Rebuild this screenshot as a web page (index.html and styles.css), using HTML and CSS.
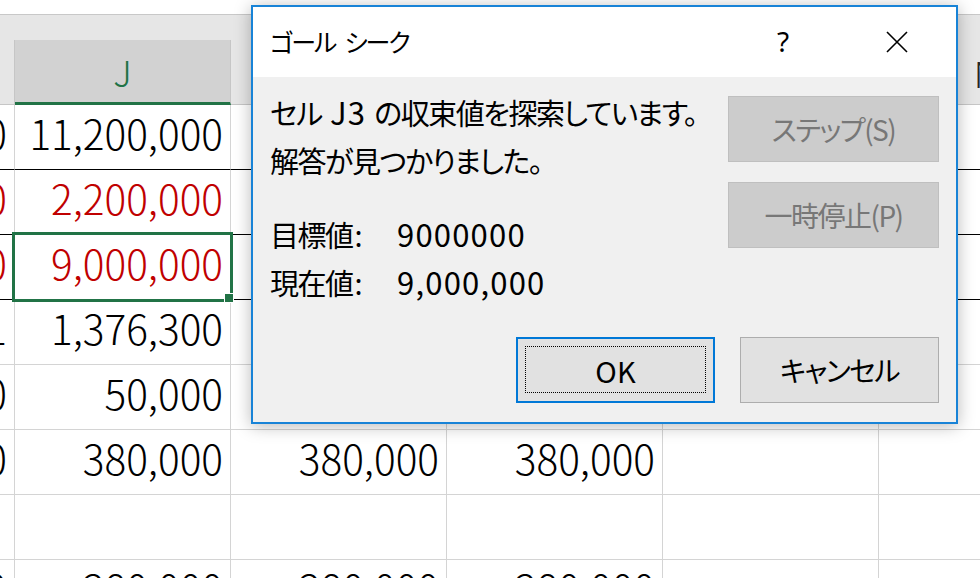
FILE: index.html
```html
<!DOCTYPE html>
<html lang="ja">
<head>
<meta charset="utf-8">
<title>ゴール シーク</title>
<link rel="stylesheet" href="styles.css">
</head>
<body>
<div class="app">
  <div class="topstrip"></div>
  <div class="colband"></div>
  <div class="colheads">
    <div class="ch"></div>
    <div class="ch sel">J</div>
    <div class="ch">K</div>
    <div class="ch">L</div>
    <div class="ch">M</div>
    <div class="ch">N</div>
  </div>
  <div class="sheet">
    <div class="row dark">
      <div class="cell">0</div>
      <div class="cell">11,200,000</div>
      <div class="cell"></div><div class="cell"></div><div class="cell"></div><div class="cell"></div>
    </div>
    <div class="row dark">
      <div class="cell red">0</div>
      <div class="cell red">2,200,000</div>
      <div class="cell"></div><div class="cell"></div><div class="cell"></div><div class="cell"></div>
    </div>
    <div class="row dark">
      <div class="cell red">0</div>
      <div class="cell red">9,000,000</div>
      <div class="cell"></div><div class="cell"></div><div class="cell"></div><div class="cell"></div>
    </div>
    <div class="row">
      <div class="cell">1</div>
      <div class="cell">1,376,300</div>
      <div class="cell"></div><div class="cell"></div><div class="cell"></div><div class="cell"></div>
    </div>
    <div class="row">
      <div class="cell">0</div>
      <div class="cell">50,000</div>
      <div class="cell"></div><div class="cell"></div><div class="cell"></div><div class="cell"></div>
    </div>
    <div class="row">
      <div class="cell">0</div>
      <div class="cell">380,000</div>
      <div class="cell">380,000</div>
      <div class="cell">380,000</div>
      <div class="cell"></div><div class="cell"></div>
    </div>
    <div class="row">
      <div class="cell"></div><div class="cell"></div><div class="cell"></div>
      <div class="cell"></div><div class="cell"></div><div class="cell"></div>
    </div>
    <div class="row">
      <div class="cell">0</div>
      <div class="cell">380,000</div>
      <div class="cell">380,000</div>
      <div class="cell">380,000</div>
      <div class="cell"></div><div class="cell"></div>
    </div>
  </div>

  <div class="selection"></div>
  <div class="fill-handle"></div>

  <div class="dialog">
    <div class="titlebar">
      <div class="title">ゴール<span class="gap"> </span>シーク</div>
      <div class="tb-help">?</div>
      <div class="tb-close">
        <svg width="22" height="22" viewBox="0 0 22 22"><path d="M1 1 L21 21 M21 1 L1 21" stroke="#000" stroke-width="1.6" fill="none"/></svg>
      </div>
    </div>
    <div class="dbody">
      <div class="top">
        <div class="texts">
          <div class="msg">
            <div>セル<span class="num"> J3 </span>の収束値を探索しています。</div>
            <div>解答が見つかりました。</div>
          </div>
          <div class="vals">
            <div>目標値<span class="colon">:</span></div><div class="num">9000000</div>
            <div>現在値<span class="colon">:</span></div><div class="num">9,000,000</div>
          </div>
        </div>
        <div class="btncol">
          <div class="btn dis">ステップ(S)</div>
          <div class="btn dis">一時停止(P)</div>
        </div>
      </div>
      <div class="bottom">
        <div class="btn wide ok"><span class="focus"></span>OK</div>
        <div class="btn wide">キャンセル</div>
      </div>
    </div>
  </div>
</div>
</body>
</html>
```
FILE: styles.css
```css
* { box-sizing: border-box; }
html, body { margin: 0; padding: 0; }
body {
  width: 980px;
  height: 578px;
  overflow: hidden;
  background: #fff;
  font-family: "Noto Sans CJK JP", "Noto Sans", sans-serif;
}
.app {
  position: relative;
  width: 980px;
  height: 578px;
  overflow: hidden;
}
.topstrip { height: 14px; background: #fff; }
.colband {
  height: 26px;
  background: #e6e6e6;
  border-top: 1px solid #c8c8c8;
}
.colheads, .row {
  display: grid;
  grid-template-columns: 15px 216px 216px 216px 216px 216px;
}
.colheads { height: 65px; }
.ch {
  background: #e6e6e6;
  border-right: 1px solid #c6c6c6;
  border-bottom: 1px solid #c6c6c6;
  color: #262626;
  font-size: 36px;
  font-weight: 300;
  display: flex;
  align-items: center;
  justify-content: center;
}
.ch.sel {
  background: #d2d2d2;
  border-bottom: 3px solid #217346;
  color: #217346;
}
.row { height: 65px; }
.cell {
  border-right: 1px solid #d4d4d4;
  border-bottom: 1px solid #d4d4d4;
  display: flex;
  justify-content: flex-end;
  align-items: flex-start;
  padding-right: 7px;
  overflow: hidden;
  white-space: nowrap;
  font-size: 40.5px;
  font-weight: 300;
  line-height: 55px;
  color: #000;
}
.row.dark .cell { border-bottom-color: #000; }
.cell.red { color: #c00000; }

.selection {
  position: absolute;
  left: 12px;
  top: 232px;
  width: 221px;
  height: 70px;
  border: 3px solid #217346;
}
.fill-handle {
  position: absolute;
  left: 224px;
  top: 293px;
  width: 10px;
  height: 10px;
  background: #217346;
  border: 1px solid #fff;
}

.dialog {
  position: absolute;
  left: 251px;
  top: 5px;
  width: 707px;
  height: 419px;
  border: 2px solid #1883d7;
  background: #f0f0f0;
  display: flex;
  flex-direction: column;
  box-shadow: 0 2px 16px rgba(0, 0, 0, 0.28);
  color: #000;
}
.titlebar {
  height: 70px;
  background: #fff;
  display: flex;
  align-items: center;
  padding-left: 17px;
  font-size: 25px;
  font-feature-settings: "palt";
}
.title { flex: 1; margin-top: -2px; letter-spacing: -2px; }
.gap { display: inline-block; width: 9px; }
.tb-help {
  width: 60px;
  text-align: center;
  font-family: "Noto Sans", sans-serif;
  font-size: 28px;
  margin-top: -2px;
}
.tb-close {
  width: 92px;
  margin-left: 38px;
  margin-right: 13px;
  display: flex;
  justify-content: center;
  align-items: center;
}
.dbody {
  flex: 1;
  padding: 19px 17px 19px 17px;
  display: flex;
  flex-direction: column;
  font-size: 29px;
  font-feature-settings: "palt";
}
.top {
  display: flex;
  justify-content: space-between;
}
.texts { letter-spacing: -1.5px; }
.num {
  font-size: 31px;
  letter-spacing: 1.2px;
  font-feature-settings: normal;
}
.colon { letter-spacing: 0; padding-left: 2px; }
.msg {
  margin-top: -8px;
  line-height: 48px;
}
.vals {
  margin-top: 26px;
  line-height: 48px;
  display: grid;
  grid-template-columns: 127px auto;
}
.btncol {
  width: 211px;
  display: flex;
  flex-direction: column;
  gap: 20px;
}
.btn {
  height: 66px;
  display: flex;
  align-items: center;
  justify-content: center;
  border: 1px solid #adadad;
  background: #e1e1e1;
  font-size: 28px;
  letter-spacing: -1.5px;
}
.btn.dis {
  background: #cccccc;
  border-color: #bfbfbf;
  color: #777;
}
.bottom {
  margin-top: auto;
  display: flex;
  justify-content: flex-end;
  gap: 25px;
}
.btn.wide { width: 199px; }
.btn.ok {
  position: relative;
  border: 2px solid #0078d7;
  letter-spacing: 0;
  font-size: 29px;
}
.focus {
  position: absolute;
  left: 7px;
  right: 7px;
  top: 7px;
  bottom: 8px;
  border: 1px dotted #000;
}
```
